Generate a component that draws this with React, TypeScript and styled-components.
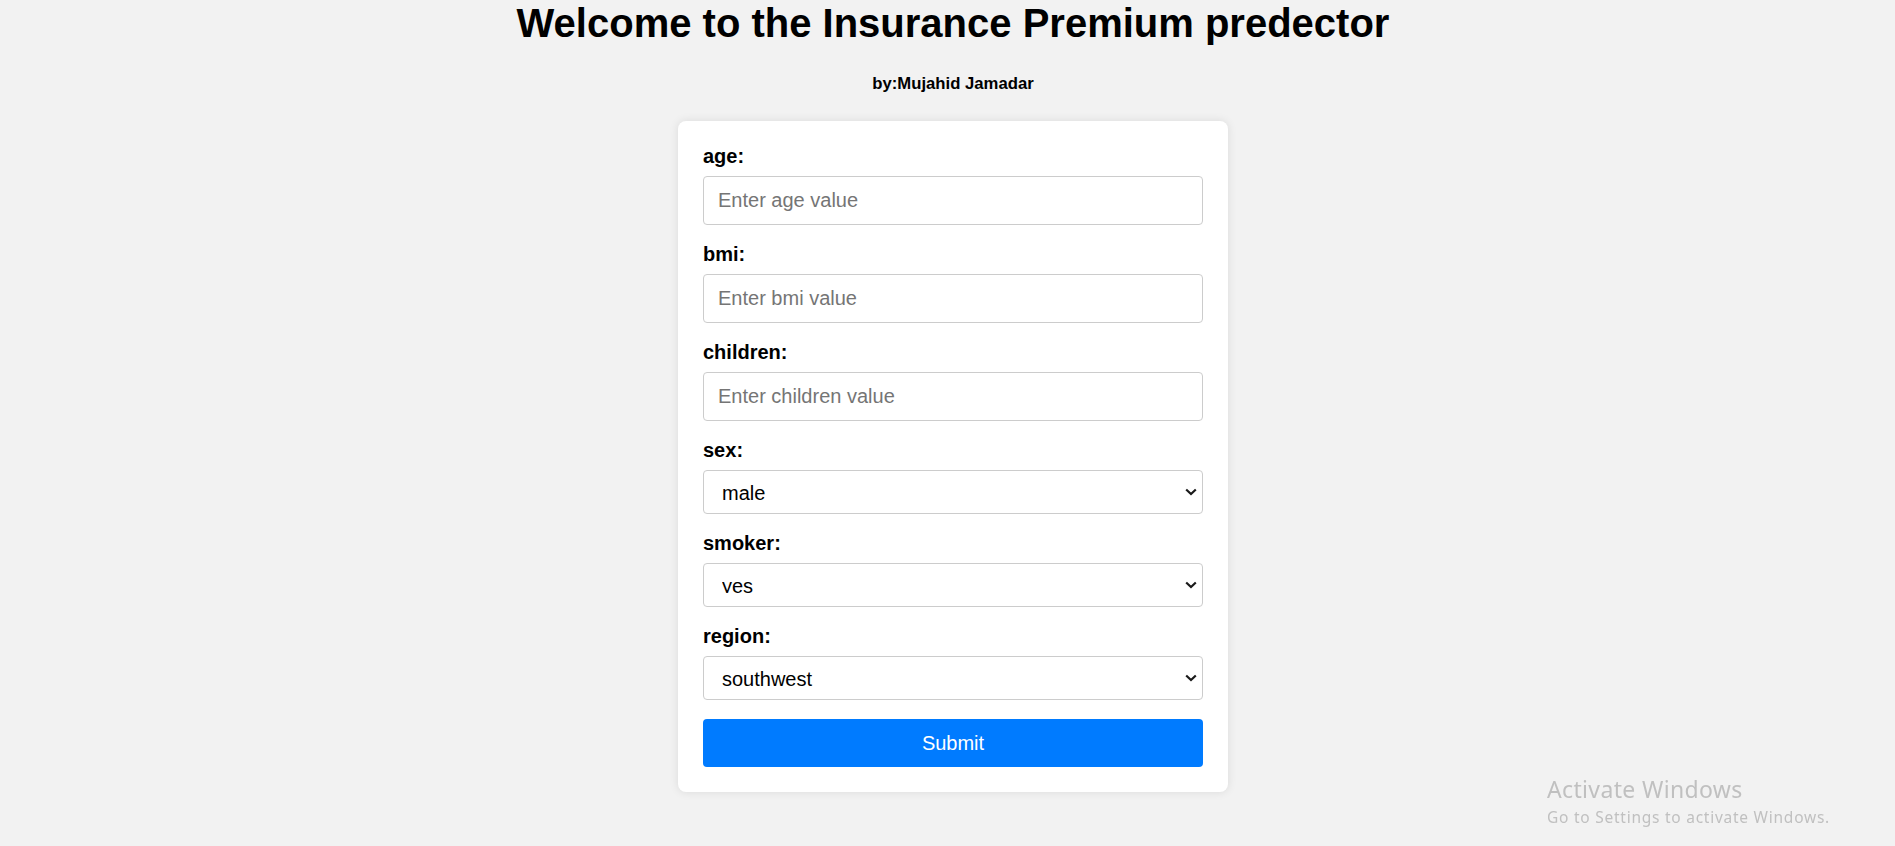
import React from "react";
import styled, { createGlobalStyle } from "styled-components";

const GlobalStyle = createGlobalStyle`
  html, body {
    margin: 0;
    padding: 0;
    background: #f2f2f2;
  }
  body {
    font-family: "Liberation Sans", Arial, sans-serif;
    color: #000;
  }
  * { box-sizing: border-box; }
`;

const Page = styled.div`
  min-height: 846px;
  display: flex;
  flex-direction: column;
  align-items: center;
  padding-left: 11px;
`;

const Title = styled.h1`
  margin: 0;
  font-size: 40px;
  line-height: 46px;
  font-weight: 700;
  text-align: center;
`;

const Byline = styled.p`
  margin: 28px 0 27px;
  font-size: 16.7px;
  line-height: 20px;
  font-weight: 700;
  text-align: center;
`;

const Card = styled.form`
  width: 550px;
  padding: 24px 25px 25px;
  background: #fff;
  border-radius: 8px;
  box-shadow: 0 0 10px rgba(0, 0, 0, 0.1);
  display: flex;
  flex-direction: column;
`;

const Field = styled.div`
  display: flex;
  flex-direction: column;
  margin-bottom: 18px;
`;

const Label = styled.label`
  display: block;
  font-size: 20px;
  line-height: 23px;
  font-weight: 700;
  margin-bottom: 8px;
`;

const TextInput = styled.input`
  width: 100%;
  height: 49px;
  padding: 0 14px;
  border: 1px solid #cccccc;
  border-radius: 4px;
  font-family: "Liberation Sans", Arial, sans-serif;
  font-size: 20px;
  color: #000;
  background: #fff;
  outline: none;
  &::placeholder {
    color: #757575;
  }
`;

const SelectWrap = styled.div`
  position: relative;
  width: 100%;
`;

const Select = styled.select`
  appearance: none;
  -webkit-appearance: none;
  width: 100%;
  height: 44px;
  padding: 12.6px 30px 12.6px 18px;
  border: 1px solid #cccccc;
  border-radius: 4px;
  font-family: "Liberation Sans", Arial, sans-serif;
  font-size: 20px;
  line-height: 18px;
  color: #000;
  background: #fff;
  outline: none;
  overflow: hidden;
`;

const Chevron = styled.svg`
  position: absolute;
  right: 6px;
  top: 18px;
  width: 12px;
  height: 8px;
  pointer-events: none;
`;

const SubmitButton = styled.button`
  width: 100%;
  height: 48px;
  margin-top: 1px;
  border: none;
  border-radius: 4px;
  background: #007bff;
  color: #fff;
  font-family: "Liberation Sans", Arial, sans-serif;
  font-size: 20px;
  cursor: pointer;
`;

const Watermark = styled.div`
  position: fixed;
  left: 1547px;
  top: 775px;
  color: #c0c0c0;
  font-family: "Noto Sans", "Open Sans", sans-serif;
  pointer-events: none;
`;

const WatermarkTitle = styled.div`
  font-size: 23px;
  line-height: 28px;
  letter-spacing: 0.35px;
`;

const WatermarkSub = styled.div`
  font-size: 15.5px;
  line-height: 22px;
  letter-spacing: 0.75px;
  margin-top: 3px;
`;

type InputField = { name: string; placeholder: string };
type SelectField = { name: string; options: string[]; value: string };

const inputs: InputField[] = [
  { name: "age", placeholder: "Enter age value" },
  { name: "bmi", placeholder: "Enter bmi value" },
  { name: "children", placeholder: "Enter children value" },
];

const selects: SelectField[] = [
  { name: "sex", options: ["male", "female"], value: "male" },
  { name: "smoker", options: ["yes", "no"], value: "yes" },
  {
    name: "region",
    options: ["southwest", "southeast", "northwest", "northeast"],
    value: "southwest",
  },
];

export default function App() {
  return (
    <>
      <GlobalStyle />
      <Page>
        <Title>Welcome to the Insurance Premium predector</Title>
        <Byline>by:Mujahid Jamadar</Byline>
        <Card onSubmit={(e) => e.preventDefault()}>
          {inputs.map((f) => (
            <Field key={f.name}>
              <Label htmlFor={f.name}>{f.name}:</Label>
              <TextInput id={f.name} name={f.name} type="text" placeholder={f.placeholder} />
            </Field>
          ))}
          {selects.map((f) => (
            <Field key={f.name}>
              <Label htmlFor={f.name}>{f.name}:</Label>
              <SelectWrap>
                <Select id={f.name} name={f.name} defaultValue={f.value}>
                  {f.options.map((o) => (
                    <option key={o} value={o}>
                      {o}
                    </option>
                  ))}
                </Select>
                <Chevron viewBox="0 0 12 8">
                  <polyline
                    points="1.2,1.5 6,6 10.8,1.5"
                    fill="none"
                    stroke="#1a1a1a"
                    strokeWidth="2.2"
                  />
                </Chevron>
              </SelectWrap>
            </Field>
          ))}
          <SubmitButton type="submit">Submit</SubmitButton>
        </Card>
      </Page>
      <Watermark>
        <WatermarkTitle>Activate Windows</WatermarkTitle>
        <WatermarkSub>Go to Settings to activate Windows.</WatermarkSub>
      </Watermark>
    </>
  );
}
